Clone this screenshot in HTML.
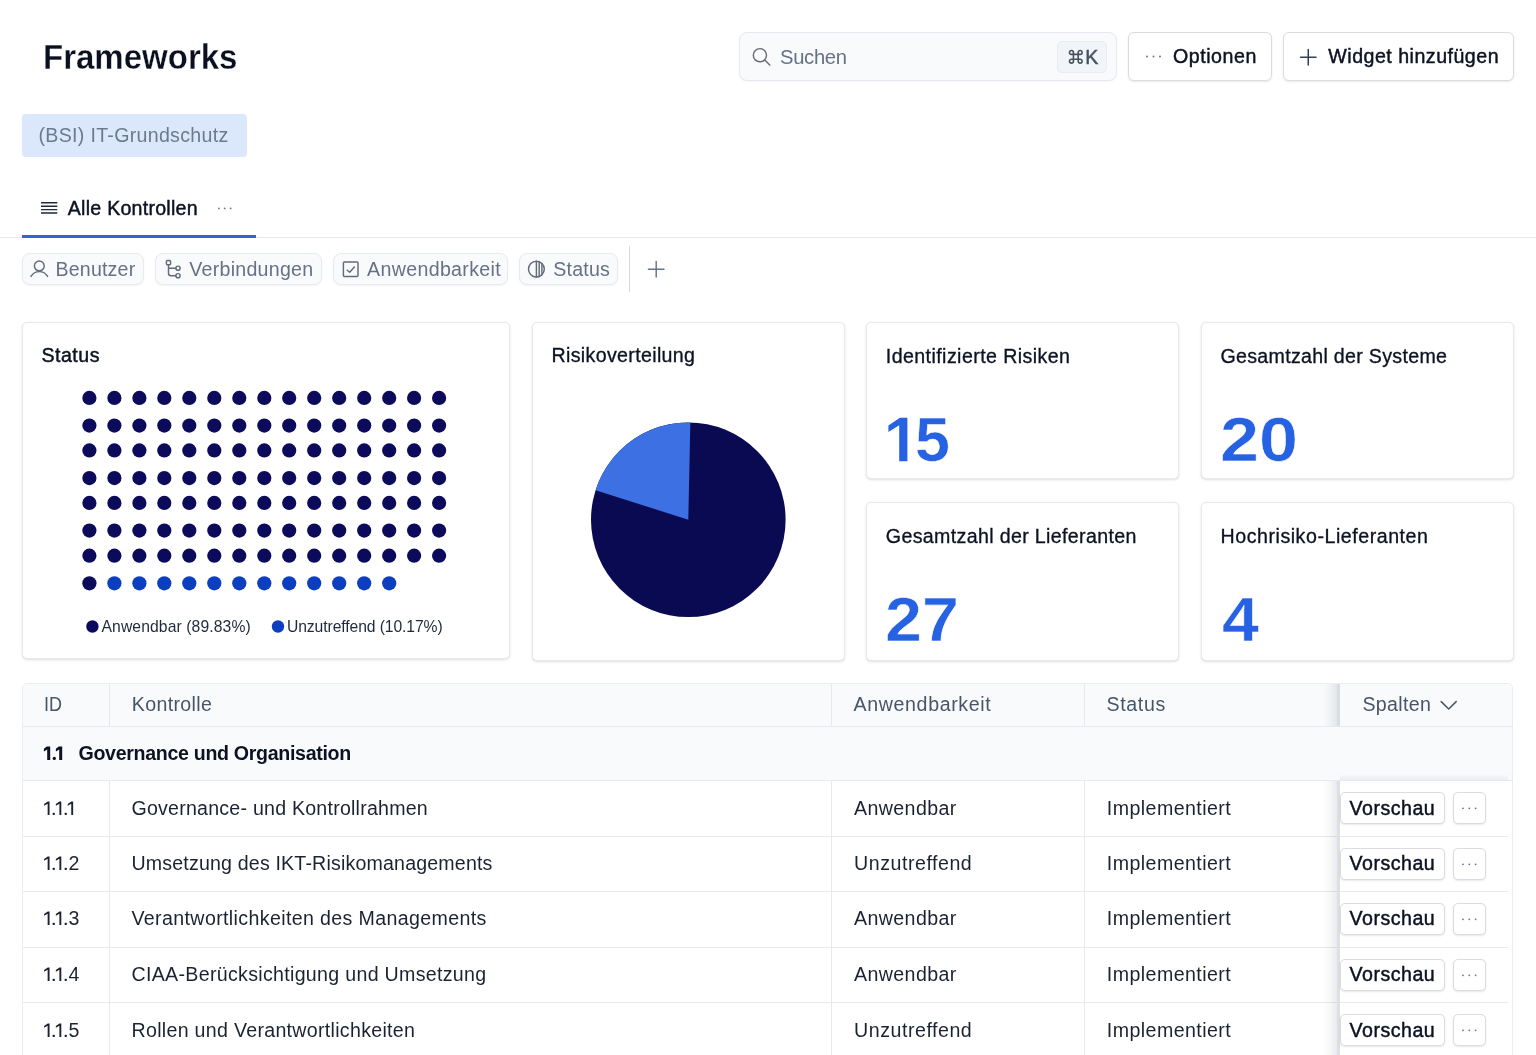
<!DOCTYPE html>
<html lang="de"><head><meta charset="utf-8"><title>Frameworks</title>
<style>
html,body{margin:0;padding:0;background:#fff;}
body{width:1536px;height:1055px;position:relative;overflow:hidden;will-change:transform;font-family:"Liberation Sans",sans-serif;color:#0f172a;}
.t{position:absolute;white-space:nowrap;display:block;}
.b{position:absolute;box-sizing:border-box;}
svg{position:absolute;overflow:visible;}
.card{position:absolute;box-sizing:border-box;background:#fff;border:1px solid #e7e9eb;border-radius:5px;box-shadow:0 1px 3px rgba(0,0,0,.10),0 1px 2px -1px rgba(0,0,0,.10);}
.chip{position:absolute;box-sizing:border-box;background:#f8fafc;border:1px solid #e7eaef;border-radius:8px;box-shadow:0 1px 2px rgba(15,23,42,.05);}
.btn{position:absolute;box-sizing:border-box;background:#fff;border:1px solid #d9dce1;border-radius:6px;box-shadow:0 1px 2px rgba(15,23,42,.10);}
</style></head><body>
<span class="t" style="left:43.00px;top:40.00px;font-size:34.4px;line-height:34.4px;color:#0b1020;font-weight:700;transform:scaleX(0.9597);transform-origin:0 0;-webkit-text-stroke:0.3px #fff;">Frameworks</span>
<div class="b" style="left:739px;top:32.4px;width:378px;height:48.4px;background:#f8fafc;border:1px solid #e6eaf0;border-radius:8px;box-shadow:0 1px 2px rgba(15,23,42,.04);"></div>
<svg style="left:750px;top:45px" width="22" height="22" viewBox="0 0 22 22" fill="none" stroke="#666e7b" stroke-width="1.45" stroke-linecap="round"><circle cx="9.9" cy="10.2" r="6.6"/><path d="M14.7 15 L19.8 20"/></svg>
<span class="t" style="left:780.00px;top:47.00px;font-size:20.2px;line-height:20.2px;color:#667186;letter-spacing:-0.301px;">Suchen</span>
<div class="b" style="left:1057px;top:41px;width:50px;height:31.6px;background:#f1f5f9;border:1px solid #e8ecf1;border-radius:5px;"></div>
<svg style="left:1068px;top:48.6px" width="15.6" height="15.6" viewBox="0 0 15 15" fill="none" stroke="#475260" stroke-width="1.55"><path d="M5.2 5.2 H9.8 V9.8 H5.2 Z M5.2 5.2 V3.3 A1.9 1.9 0 1 0 3.3 5.2 H5.2 M9.8 5.2 H11.7 A1.9 1.9 0 1 0 9.8 3.3 V5.2 M9.8 9.8 V11.7 A1.9 1.9 0 1 0 11.7 9.8 H9.8 M5.2 9.8 H3.3 A1.9 1.9 0 1 0 5.2 11.7 V9.8"/></svg>
<span class="t" style="left:1085.30px;top:48.00px;font-size:19.6px;line-height:19.6px;color:#475260;-webkit-text-stroke:0.45px #475260;">K</span>
<div class="btn" style="left:1128px;top:32.4px;width:143.6px;height:48.8px;"></div>
<svg style="left:1145px;top:54px" width="18" height="5" viewBox="0 0 18 5" fill="#64748b"><circle cx="2" cy="2.5" r="0.95"/><circle cx="8.5" cy="2.5" r="0.95"/><circle cx="15" cy="2.5" r="0.95"/></svg>
<span class="t" style="left:1173.00px;top:47.00px;font-size:19.6px;line-height:19.6px;color:#0c1222;letter-spacing:0.536px;-webkit-text-stroke:0.45px #0c1222;">Optionen</span>
<div class="btn" style="left:1283px;top:32.4px;width:230.6px;height:48.8px;"></div>
<svg style="left:1300px;top:48.5px" width="16.5" height="16.5" viewBox="0 0 16.5 16.5" fill="none" stroke="#334155" stroke-width="1.5" stroke-linecap="round"><path d="M8.25 0.5 V16 M0.5 8.25 H16"/></svg>
<span class="t" style="left:1328.30px;top:47.00px;font-size:19.6px;line-height:19.6px;color:#0c1222;letter-spacing:0.497px;-webkit-text-stroke:0.45px #0c1222;">Widget hinzufügen</span>
<div class="b" style="left:22px;top:114px;width:225px;height:43px;background:#dbe8fc;border-radius:4px;"></div>
<span class="t" style="left:38.50px;top:126.00px;font-size:19.6px;line-height:19.6px;color:#6b7a90;letter-spacing:0.302px;">(BSI) IT-Grundschutz</span>
<div class="b" style="left:0;top:237px;width:1536px;height:1px;background:#e5e7eb;"></div>
<div class="b" style="left:21.8px;top:234.8px;width:234.6px;height:3.2px;background:#3165d6;"></div>
<svg style="left:40.6px;top:202px" width="17" height="13" viewBox="0 0 17 13" fill="none" stroke="#1e293b" stroke-width="1.4"><path d="M0 0.8 H16.3 M0 4.25 H16.3 M0 7.65 H16.3 M0 11.05 H16.3"/></svg>
<span class="t" style="left:67.80px;top:199.00px;font-size:19.6px;line-height:19.6px;color:#0c1222;letter-spacing:0.244px;-webkit-text-stroke:0.45px #0c1222;">Alle Kontrollen</span>
<svg style="left:216.5px;top:206px" width="16" height="5" viewBox="0 0 16 5" fill="#64748b"><circle cx="1.9" cy="2.4" r="0.9"/><circle cx="7.7" cy="2.4" r="0.9"/><circle cx="13.6" cy="2.4" r="0.9"/></svg>
<div class="chip" style="left:21.8px;top:253.2px;width:121.8px;height:31.5px;"></div>
<div class="chip" style="left:154.8px;top:253.2px;width:166.89999999999998px;height:31.5px;"></div>
<div class="chip" style="left:332.8px;top:253.2px;width:174.8px;height:31.5px;"></div>
<div class="chip" style="left:518.8px;top:253.2px;width:98.80000000000007px;height:31.5px;"></div>
<svg style="left:29px;top:258px" width="20" height="20" viewBox="0 0 20 20" fill="none" stroke="#626b7a" stroke-width="1.45" stroke-linecap="round" stroke-linejoin="round"><circle cx="10.3" cy="7.9" r="4.9"/><path d="M2 18.4 C4.2 14.6 7.2 13.6 10.3 13.6 C13.4 13.6 16.4 14.6 18.6 18.4"/></svg>
<span class="t" style="left:55.50px;top:260.00px;font-size:19.6px;line-height:19.6px;color:#667186;letter-spacing:0.179px;">Benutzer</span>
<svg style="left:164px;top:258px" width="20" height="20" viewBox="0 0 20 20" fill="none" stroke="#626b7a" stroke-width="1.45" stroke-linecap="round" stroke-linejoin="round"><rect x="2.4" y="2.5" width="4.2" height="4.2" rx="1"/><path d="M4.5 6.7 V15.2 Q4.5 17.7 7 17.7 H11.8 M4.5 10.2 H11.8"/><circle cx="14" cy="10.2" r="2.1"/><circle cx="14" cy="17.7" r="2.1"/></svg>
<span class="t" style="left:189.30px;top:260.00px;font-size:19.6px;line-height:19.6px;color:#667186;letter-spacing:0.266px;">Verbindungen</span>
<svg style="left:341px;top:259px" width="20" height="20" viewBox="0 0 20 20" fill="none" stroke="#626b7a" stroke-width="1.45" stroke-linecap="round" stroke-linejoin="round"><rect x="2.4" y="3" width="14.6" height="14.4" rx="1"/><path d="M6.2 11.2 L8.7 13.3 L13.4 8"/></svg>
<span class="t" style="left:367.00px;top:260.00px;font-size:19.6px;line-height:19.6px;color:#667186;letter-spacing:0.345px;">Anwendbarkeit</span>
<svg style="left:526px;top:259px" width="21" height="21" viewBox="0 0 21 21" fill="none" stroke="#626b7a" stroke-width="1.45" stroke-linecap="round" stroke-linejoin="round" stroke-width="1.3"><circle cx="10.4" cy="10.1" r="7.9"/><path d="M10.4 2.2 V18 M13.2 2.8 V17.4 M15.9 4.5 V15.7"/></svg>
<span class="t" style="left:553.30px;top:260.00px;font-size:19.6px;line-height:19.6px;color:#667186;letter-spacing:0.207px;">Status</span>
<div class="b" style="left:628.7px;top:246.3px;width:1.3px;height:45.4px;background:#d5d9e0;"></div>
<svg style="left:647.5px;top:261px" width="16.5" height="16.5" viewBox="0 0 16.5 16.5" fill="none" stroke="#64748b" stroke-width="1.45" stroke-linecap="round"><path d="M8.2 0.4 V16 M0.4 8.2 H16"/></svg>
<div class="card" style="left:22px;top:322px;width:488px;height:337px;"></div>
<div class="card" style="left:532px;top:322px;width:313px;height:339px;"></div>
<div class="card" style="left:866px;top:322px;width:313px;height:157px;"></div>
<div class="card" style="left:1201px;top:322px;width:313px;height:157px;"></div>
<div class="card" style="left:866px;top:502px;width:313px;height:159px;"></div>
<div class="card" style="left:1201px;top:502px;width:313px;height:159px;"></div>
<span class="t" style="left:41.50px;top:346.00px;font-size:19.6px;line-height:19.6px;color:#0c1222;letter-spacing:0.487px;-webkit-text-stroke:0.45px #0c1222;">Status</span>
<svg style="left:0;top:0" width="1536" height="700" viewBox="0 0 1536 700"><circle cx="89.4" cy="397.9" r="7.1" fill="#0c0a5a"/><circle cx="114.4" cy="397.9" r="7.1" fill="#0c0a5a"/><circle cx="139.4" cy="397.9" r="7.1" fill="#0c0a5a"/><circle cx="164.3" cy="397.9" r="7.1" fill="#0c0a5a"/><circle cx="189.3" cy="397.9" r="7.1" fill="#0c0a5a"/><circle cx="214.3" cy="397.9" r="7.1" fill="#0c0a5a"/><circle cx="239.3" cy="397.9" r="7.1" fill="#0c0a5a"/><circle cx="264.3" cy="397.9" r="7.1" fill="#0c0a5a"/><circle cx="289.2" cy="397.9" r="7.1" fill="#0c0a5a"/><circle cx="314.2" cy="397.9" r="7.1" fill="#0c0a5a"/><circle cx="339.2" cy="397.9" r="7.1" fill="#0c0a5a"/><circle cx="364.2" cy="397.9" r="7.1" fill="#0c0a5a"/><circle cx="389.2" cy="397.9" r="7.1" fill="#0c0a5a"/><circle cx="414.1" cy="397.9" r="7.1" fill="#0c0a5a"/><circle cx="439.1" cy="397.9" r="7.1" fill="#0c0a5a"/><circle cx="89.4" cy="425.6" r="7.1" fill="#0c0a5a"/><circle cx="114.4" cy="425.6" r="7.1" fill="#0c0a5a"/><circle cx="139.4" cy="425.6" r="7.1" fill="#0c0a5a"/><circle cx="164.3" cy="425.6" r="7.1" fill="#0c0a5a"/><circle cx="189.3" cy="425.6" r="7.1" fill="#0c0a5a"/><circle cx="214.3" cy="425.6" r="7.1" fill="#0c0a5a"/><circle cx="239.3" cy="425.6" r="7.1" fill="#0c0a5a"/><circle cx="264.3" cy="425.6" r="7.1" fill="#0c0a5a"/><circle cx="289.2" cy="425.6" r="7.1" fill="#0c0a5a"/><circle cx="314.2" cy="425.6" r="7.1" fill="#0c0a5a"/><circle cx="339.2" cy="425.6" r="7.1" fill="#0c0a5a"/><circle cx="364.2" cy="425.6" r="7.1" fill="#0c0a5a"/><circle cx="389.2" cy="425.6" r="7.1" fill="#0c0a5a"/><circle cx="414.1" cy="425.6" r="7.1" fill="#0c0a5a"/><circle cx="439.1" cy="425.6" r="7.1" fill="#0c0a5a"/><circle cx="89.4" cy="450.4" r="7.1" fill="#0c0a5a"/><circle cx="114.4" cy="450.4" r="7.1" fill="#0c0a5a"/><circle cx="139.4" cy="450.4" r="7.1" fill="#0c0a5a"/><circle cx="164.3" cy="450.4" r="7.1" fill="#0c0a5a"/><circle cx="189.3" cy="450.4" r="7.1" fill="#0c0a5a"/><circle cx="214.3" cy="450.4" r="7.1" fill="#0c0a5a"/><circle cx="239.3" cy="450.4" r="7.1" fill="#0c0a5a"/><circle cx="264.3" cy="450.4" r="7.1" fill="#0c0a5a"/><circle cx="289.2" cy="450.4" r="7.1" fill="#0c0a5a"/><circle cx="314.2" cy="450.4" r="7.1" fill="#0c0a5a"/><circle cx="339.2" cy="450.4" r="7.1" fill="#0c0a5a"/><circle cx="364.2" cy="450.4" r="7.1" fill="#0c0a5a"/><circle cx="389.2" cy="450.4" r="7.1" fill="#0c0a5a"/><circle cx="414.1" cy="450.4" r="7.1" fill="#0c0a5a"/><circle cx="439.1" cy="450.4" r="7.1" fill="#0c0a5a"/><circle cx="89.4" cy="478.1" r="7.1" fill="#0c0a5a"/><circle cx="114.4" cy="478.1" r="7.1" fill="#0c0a5a"/><circle cx="139.4" cy="478.1" r="7.1" fill="#0c0a5a"/><circle cx="164.3" cy="478.1" r="7.1" fill="#0c0a5a"/><circle cx="189.3" cy="478.1" r="7.1" fill="#0c0a5a"/><circle cx="214.3" cy="478.1" r="7.1" fill="#0c0a5a"/><circle cx="239.3" cy="478.1" r="7.1" fill="#0c0a5a"/><circle cx="264.3" cy="478.1" r="7.1" fill="#0c0a5a"/><circle cx="289.2" cy="478.1" r="7.1" fill="#0c0a5a"/><circle cx="314.2" cy="478.1" r="7.1" fill="#0c0a5a"/><circle cx="339.2" cy="478.1" r="7.1" fill="#0c0a5a"/><circle cx="364.2" cy="478.1" r="7.1" fill="#0c0a5a"/><circle cx="389.2" cy="478.1" r="7.1" fill="#0c0a5a"/><circle cx="414.1" cy="478.1" r="7.1" fill="#0c0a5a"/><circle cx="439.1" cy="478.1" r="7.1" fill="#0c0a5a"/><circle cx="89.4" cy="502.9" r="7.1" fill="#0c0a5a"/><circle cx="114.4" cy="502.9" r="7.1" fill="#0c0a5a"/><circle cx="139.4" cy="502.9" r="7.1" fill="#0c0a5a"/><circle cx="164.3" cy="502.9" r="7.1" fill="#0c0a5a"/><circle cx="189.3" cy="502.9" r="7.1" fill="#0c0a5a"/><circle cx="214.3" cy="502.9" r="7.1" fill="#0c0a5a"/><circle cx="239.3" cy="502.9" r="7.1" fill="#0c0a5a"/><circle cx="264.3" cy="502.9" r="7.1" fill="#0c0a5a"/><circle cx="289.2" cy="502.9" r="7.1" fill="#0c0a5a"/><circle cx="314.2" cy="502.9" r="7.1" fill="#0c0a5a"/><circle cx="339.2" cy="502.9" r="7.1" fill="#0c0a5a"/><circle cx="364.2" cy="502.9" r="7.1" fill="#0c0a5a"/><circle cx="389.2" cy="502.9" r="7.1" fill="#0c0a5a"/><circle cx="414.1" cy="502.9" r="7.1" fill="#0c0a5a"/><circle cx="439.1" cy="502.9" r="7.1" fill="#0c0a5a"/><circle cx="89.4" cy="530.6" r="7.1" fill="#0c0a5a"/><circle cx="114.4" cy="530.6" r="7.1" fill="#0c0a5a"/><circle cx="139.4" cy="530.6" r="7.1" fill="#0c0a5a"/><circle cx="164.3" cy="530.6" r="7.1" fill="#0c0a5a"/><circle cx="189.3" cy="530.6" r="7.1" fill="#0c0a5a"/><circle cx="214.3" cy="530.6" r="7.1" fill="#0c0a5a"/><circle cx="239.3" cy="530.6" r="7.1" fill="#0c0a5a"/><circle cx="264.3" cy="530.6" r="7.1" fill="#0c0a5a"/><circle cx="289.2" cy="530.6" r="7.1" fill="#0c0a5a"/><circle cx="314.2" cy="530.6" r="7.1" fill="#0c0a5a"/><circle cx="339.2" cy="530.6" r="7.1" fill="#0c0a5a"/><circle cx="364.2" cy="530.6" r="7.1" fill="#0c0a5a"/><circle cx="389.2" cy="530.6" r="7.1" fill="#0c0a5a"/><circle cx="414.1" cy="530.6" r="7.1" fill="#0c0a5a"/><circle cx="439.1" cy="530.6" r="7.1" fill="#0c0a5a"/><circle cx="89.4" cy="555.7" r="7.1" fill="#0c0a5a"/><circle cx="114.4" cy="555.7" r="7.1" fill="#0c0a5a"/><circle cx="139.4" cy="555.7" r="7.1" fill="#0c0a5a"/><circle cx="164.3" cy="555.7" r="7.1" fill="#0c0a5a"/><circle cx="189.3" cy="555.7" r="7.1" fill="#0c0a5a"/><circle cx="214.3" cy="555.7" r="7.1" fill="#0c0a5a"/><circle cx="239.3" cy="555.7" r="7.1" fill="#0c0a5a"/><circle cx="264.3" cy="555.7" r="7.1" fill="#0c0a5a"/><circle cx="289.2" cy="555.7" r="7.1" fill="#0c0a5a"/><circle cx="314.2" cy="555.7" r="7.1" fill="#0c0a5a"/><circle cx="339.2" cy="555.7" r="7.1" fill="#0c0a5a"/><circle cx="364.2" cy="555.7" r="7.1" fill="#0c0a5a"/><circle cx="389.2" cy="555.7" r="7.1" fill="#0c0a5a"/><circle cx="414.1" cy="555.7" r="7.1" fill="#0c0a5a"/><circle cx="439.1" cy="555.7" r="7.1" fill="#0c0a5a"/><circle cx="89.4" cy="583.3" r="7.1" fill="#0c0a5a"/><circle cx="114.4" cy="583.3" r="7.1" fill="#0b3fc0"/><circle cx="139.4" cy="583.3" r="7.1" fill="#0b3fc0"/><circle cx="164.3" cy="583.3" r="7.1" fill="#0b3fc0"/><circle cx="189.3" cy="583.3" r="7.1" fill="#0b3fc0"/><circle cx="214.3" cy="583.3" r="7.1" fill="#0b3fc0"/><circle cx="239.3" cy="583.3" r="7.1" fill="#0b3fc0"/><circle cx="264.3" cy="583.3" r="7.1" fill="#0b3fc0"/><circle cx="289.2" cy="583.3" r="7.1" fill="#0b3fc0"/><circle cx="314.2" cy="583.3" r="7.1" fill="#0b3fc0"/><circle cx="339.2" cy="583.3" r="7.1" fill="#0b3fc0"/><circle cx="364.2" cy="583.3" r="7.1" fill="#0b3fc0"/><circle cx="389.2" cy="583.3" r="7.1" fill="#0b3fc0"/><circle cx="92.4" cy="626.5" r="6.2" fill="#0c0a5a"/><circle cx="278" cy="626.5" r="6.2" fill="#0b3fc0"/><circle cx="688.3" cy="519.75" r="97.3" fill="#0a0a52"/><path d="M688.3 519.75 L690.34 422.47 A97.3 97.3 0 0 0 595.61 490.17 Z" fill="#3d70e3"/></svg>
<span class="t" style="left:101.50px;top:619.00px;font-size:15.7px;line-height:15.7px;color:#1e293b;letter-spacing:0.107px;">Anwendbar (89.83%)</span>
<span class="t" style="left:287.00px;top:619.00px;font-size:15.7px;line-height:15.7px;color:#1e293b;letter-spacing:-0.093px;">Unzutreffend (10.17%)</span>
<span class="t" style="left:551.50px;top:346.00px;font-size:19.6px;line-height:19.6px;color:#0c1222;letter-spacing:0.344px;-webkit-text-stroke:0.32px #0c1222;">Risikoverteilung</span>
<span class="t" style="left:885.80px;top:347.00px;font-size:19.6px;line-height:19.6px;color:#0c1222;letter-spacing:0.420px;-webkit-text-stroke:0.32px #0c1222;">Identifizierte Risiken</span>
<span class="t" style="left:1220.50px;top:347.00px;font-size:19.6px;line-height:19.6px;color:#0c1222;letter-spacing:0.308px;-webkit-text-stroke:0.32px #0c1222;">Gesamtzahl der Systeme</span>
<span class="t" style="left:885.80px;top:527.00px;font-size:19.6px;line-height:19.6px;color:#0c1222;letter-spacing:0.353px;-webkit-text-stroke:0.32px #0c1222;">Gesamtzahl der Lieferanten</span>
<span class="t" style="left:1220.50px;top:527.00px;font-size:19.6px;line-height:19.6px;color:#0c1222;letter-spacing:0.543px;-webkit-text-stroke:0.32px #0c1222;">Hochrisiko-Lieferanten</span>
<svg style="left:0;top:0" width="1536" height="700" viewBox="0 0 1536 700"><path d="M907.4 417.8 H899.9 L888.4 425.4 V432.1 L899.2 425.2 V461.3 H907.4 Z" fill="#2762e3"/></svg>
<span class="t" style="left:915.30px;top:409.00px;font-size:62.2px;line-height:62.2px;color:#2762e3;font-weight:700;transform:scaleX(1.0118);transform-origin:0 0;-webkit-text-stroke:0.55px #fff;">5</span>
<span class="t" style="left:1219.50px;top:409.00px;font-size:62.2px;line-height:62.2px;color:#2762e3;font-weight:700;transform:scaleX(1.1274);transform-origin:0 0;-webkit-text-stroke:0.55px #fff;">20</span>
<span class="t" style="left:884.50px;top:589.00px;font-size:62.2px;line-height:62.2px;color:#2762e3;font-weight:700;transform:scaleX(1.0667);transform-origin:0 0;-webkit-text-stroke:0.55px #fff;">27</span>
<span class="t" style="left:1221.60px;top:589.00px;font-size:62.2px;line-height:62.2px;color:#2762e3;font-weight:700;transform:scaleX(1.0696);transform-origin:0 0;-webkit-text-stroke:0.55px #fff;">4</span>
<div class="b" style="left:21.5px;top:683px;width:1491.5px;height:400px;border:1px solid #e9ecf1;border-radius:5px;background:#fff;overflow:hidden;"><div class="b" style="left:0;top:0;width:1491px;height:97px;background:#f8fafc;"></div></div>
<div class="b" style="left:22.5px;top:726px;width:1490.0px;height:1px;background:#e6e9ed;"></div>
<div class="b" style="left:22.5px;top:780px;width:1490.0px;height:1px;background:#e6e9ed;"></div>
<div class="b" style="left:22.5px;top:836px;width:1485.5px;height:1px;background:#e6e9ed;"></div>
<div class="b" style="left:22.5px;top:891px;width:1485.5px;height:1px;background:#e6e9ed;"></div>
<div class="b" style="left:22.5px;top:947px;width:1485.5px;height:1px;background:#e6e9ed;"></div>
<div class="b" style="left:22.5px;top:1002px;width:1485.5px;height:1px;background:#e6e9ed;"></div>
<div class="b" style="left:22.5px;top:1058px;width:1485.5px;height:1px;background:#e6e9ed;"></div>
<div class="b" style="left:109px;top:684px;width:1px;height:42px;background:#e6e9ed;"></div>
<div class="b" style="left:109px;top:781px;width:1px;height:274px;background:#e6e9ed;"></div>
<div class="b" style="left:831px;top:684px;width:1px;height:42px;background:#e6e9ed;"></div>
<div class="b" style="left:831px;top:781px;width:1px;height:274px;background:#e6e9ed;"></div>
<div class="b" style="left:1084px;top:684px;width:1px;height:42px;background:#e6e9ed;"></div>
<div class="b" style="left:1084px;top:781px;width:1px;height:274px;background:#e6e9ed;"></div>
<div class="b" style="left:1323px;top:684px;width:14.5px;height:42px;background:linear-gradient(to right,rgba(30,41,59,0),rgba(30,41,59,.03) 40%,rgba(30,41,59,.10));"></div>
<div class="b" style="left:1323px;top:781px;width:14.5px;height:280px;background:linear-gradient(to right,rgba(30,41,59,0),rgba(30,41,59,.03) 40%,rgba(30,41,59,.10));"></div>
<div class="b" style="left:1337.4px;top:684px;width:2.2px;height:42px;background:#d9dce1;"></div>
<div class="b" style="left:1337.4px;top:781px;width:2.2px;height:280px;background:#dcdfe4;"></div>
<div class="b" style="left:1339.6px;top:781px;width:168.4px;height:280px;background:#fff;"></div>
<div class="b" style="left:1339.6px;top:774px;width:168.4px;height:6px;background:linear-gradient(to bottom,rgba(30,41,59,0),rgba(30,41,59,.06));"></div>
<div class="b" style="left:1339.6px;top:836px;width:168.4000000000001px;height:1px;background:#e6e9ed;"></div>
<div class="b" style="left:1339.6px;top:891px;width:168.4000000000001px;height:1px;background:#e6e9ed;"></div>
<div class="b" style="left:1339.6px;top:947px;width:168.4000000000001px;height:1px;background:#e6e9ed;"></div>
<div class="b" style="left:1339.6px;top:1002px;width:168.4000000000001px;height:1px;background:#e6e9ed;"></div>
<div class="b" style="left:1339.6px;top:1058px;width:168.4000000000001px;height:1px;background:#e6e9ed;"></div>
<span class="t" style="left:43.50px;top:695.00px;font-size:19.6px;line-height:19.6px;color:#475569;transform:scaleX(0.9184);transform-origin:0 0;">ID</span>
<span class="t" style="left:131.80px;top:695.00px;font-size:19.6px;line-height:19.6px;color:#475569;letter-spacing:0.331px;">Kontrolle</span>
<span class="t" style="left:853.50px;top:695.00px;font-size:19.6px;line-height:19.6px;color:#475569;letter-spacing:0.637px;">Anwendbarkeit</span>
<span class="t" style="left:1106.50px;top:695.00px;font-size:19.6px;line-height:19.6px;color:#475569;letter-spacing:0.647px;">Status</span>
<span class="t" style="left:1362.50px;top:695.00px;font-size:19.6px;line-height:19.6px;color:#475569;letter-spacing:0.304px;">Spalten</span>
<svg style="left:1440px;top:700px" width="18" height="11" viewBox="0 0 18 11" fill="none" stroke="#475569" stroke-width="1.5" stroke-linecap="round" stroke-linejoin="round"><path d="M1.2 1.6 L8.7 9 L16.2 1.6"/></svg>
<span class="t" style="left:78.50px;top:744.00px;font-size:19.6px;line-height:19.6px;color:#0c1222;font-weight:700;letter-spacing:-0.315px;">Governance und Organisation</span>
<span class="t" style="left:131.50px;top:799.00px;font-size:19.6px;line-height:19.6px;color:#1b2332;letter-spacing:0.224px;">Governance- und Kontrollrahmen</span>
<span class="t" style="left:854.00px;top:799.00px;font-size:19.6px;line-height:19.6px;color:#1b2332;letter-spacing:0.393px;">Anwendbar</span>
<span class="t" style="left:1106.80px;top:799.00px;font-size:19.6px;line-height:19.6px;color:#1b2332;letter-spacing:0.440px;">Implementiert</span>
<div class="btn" style="left:1340px;top:792px;width:105px;height:32px;border-radius:5px;"></div>
<span class="t" style="left:1349.60px;top:799.00px;font-size:19.6px;line-height:19.6px;color:#0c1222;letter-spacing:0.497px;-webkit-text-stroke:0.45px #0c1222;">Vorschau</span>
<div class="btn" style="left:1453px;top:792px;width:32.5px;height:32px;border-radius:5px;"></div>
<svg style="left:1461px;top:806.1px" width="17" height="5" viewBox="0 0 17 5" fill="#64748b"><circle cx="2" cy="2.3" r="0.9"/><circle cx="8.3" cy="2.3" r="0.9"/><circle cx="14.6" cy="2.3" r="0.9"/></svg>
<span class="t" style="left:68.60px;top:854.00px;font-size:19.6px;line-height:19.6px;color:#1b2332;">2</span>
<span class="t" style="left:131.50px;top:854.00px;font-size:19.6px;line-height:19.6px;color:#1b2332;letter-spacing:0.173px;">Umsetzung des IKT-Risikomanagements</span>
<span class="t" style="left:854.00px;top:854.00px;font-size:19.6px;line-height:19.6px;color:#1b2332;letter-spacing:0.540px;">Unzutreffend</span>
<span class="t" style="left:1106.80px;top:854.00px;font-size:19.6px;line-height:19.6px;color:#1b2332;letter-spacing:0.440px;">Implementiert</span>
<div class="btn" style="left:1340px;top:848px;width:105px;height:32px;border-radius:5px;"></div>
<span class="t" style="left:1349.60px;top:854.00px;font-size:19.6px;line-height:19.6px;color:#0c1222;letter-spacing:0.497px;-webkit-text-stroke:0.45px #0c1222;">Vorschau</span>
<div class="btn" style="left:1453px;top:848px;width:32.5px;height:32px;border-radius:5px;"></div>
<svg style="left:1461px;top:861.6px" width="17" height="5" viewBox="0 0 17 5" fill="#64748b"><circle cx="2" cy="2.3" r="0.9"/><circle cx="8.3" cy="2.3" r="0.9"/><circle cx="14.6" cy="2.3" r="0.9"/></svg>
<span class="t" style="left:68.60px;top:909.00px;font-size:19.6px;line-height:19.6px;color:#1b2332;">3</span>
<span class="t" style="left:131.50px;top:909.00px;font-size:19.6px;line-height:19.6px;color:#1b2332;letter-spacing:0.369px;">Verantwortlichkeiten des Managements</span>
<span class="t" style="left:854.00px;top:909.00px;font-size:19.6px;line-height:19.6px;color:#1b2332;letter-spacing:0.393px;">Anwendbar</span>
<span class="t" style="left:1106.80px;top:909.00px;font-size:19.6px;line-height:19.6px;color:#1b2332;letter-spacing:0.440px;">Implementiert</span>
<div class="btn" style="left:1340px;top:903px;width:105px;height:32px;border-radius:5px;"></div>
<span class="t" style="left:1349.60px;top:909.00px;font-size:19.6px;line-height:19.6px;color:#0c1222;letter-spacing:0.497px;-webkit-text-stroke:0.45px #0c1222;">Vorschau</span>
<div class="btn" style="left:1453px;top:903px;width:32.5px;height:32px;border-radius:5px;"></div>
<svg style="left:1461px;top:917.1px" width="17" height="5" viewBox="0 0 17 5" fill="#64748b"><circle cx="2" cy="2.3" r="0.9"/><circle cx="8.3" cy="2.3" r="0.9"/><circle cx="14.6" cy="2.3" r="0.9"/></svg>
<span class="t" style="left:68.60px;top:965.00px;font-size:19.6px;line-height:19.6px;color:#1b2332;">4</span>
<span class="t" style="left:131.50px;top:965.00px;font-size:19.6px;line-height:19.6px;color:#1b2332;letter-spacing:0.310px;">CIAA-Berücksichtigung und Umsetzung</span>
<span class="t" style="left:854.00px;top:965.00px;font-size:19.6px;line-height:19.6px;color:#1b2332;letter-spacing:0.393px;">Anwendbar</span>
<span class="t" style="left:1106.80px;top:965.00px;font-size:19.6px;line-height:19.6px;color:#1b2332;letter-spacing:0.440px;">Implementiert</span>
<div class="btn" style="left:1340px;top:959px;width:105px;height:32px;border-radius:5px;"></div>
<span class="t" style="left:1349.60px;top:965.00px;font-size:19.6px;line-height:19.6px;color:#0c1222;letter-spacing:0.497px;-webkit-text-stroke:0.45px #0c1222;">Vorschau</span>
<div class="btn" style="left:1453px;top:959px;width:32.5px;height:32px;border-radius:5px;"></div>
<svg style="left:1461px;top:972.7px" width="17" height="5" viewBox="0 0 17 5" fill="#64748b"><circle cx="2" cy="2.3" r="0.9"/><circle cx="8.3" cy="2.3" r="0.9"/><circle cx="14.6" cy="2.3" r="0.9"/></svg>
<span class="t" style="left:68.60px;top:1021.00px;font-size:19.6px;line-height:19.6px;color:#1b2332;">5</span>
<span class="t" style="left:131.50px;top:1021.00px;font-size:19.6px;line-height:19.6px;color:#1b2332;letter-spacing:0.298px;">Rollen und Verantwortlichkeiten</span>
<span class="t" style="left:854.00px;top:1021.00px;font-size:19.6px;line-height:19.6px;color:#1b2332;letter-spacing:0.540px;">Unzutreffend</span>
<span class="t" style="left:1106.80px;top:1021.00px;font-size:19.6px;line-height:19.6px;color:#1b2332;letter-spacing:0.440px;">Implementiert</span>
<div class="btn" style="left:1340px;top:1014px;width:105px;height:32px;border-radius:5px;"></div>
<span class="t" style="left:1349.60px;top:1021.00px;font-size:19.6px;line-height:19.6px;color:#0c1222;letter-spacing:0.497px;-webkit-text-stroke:0.45px #0c1222;">Vorschau</span>
<div class="btn" style="left:1453px;top:1014px;width:32.5px;height:32px;border-radius:5px;"></div>
<svg style="left:1461px;top:1028.2px" width="17" height="5" viewBox="0 0 17 5" fill="#64748b"><circle cx="2" cy="2.3" r="0.9"/><circle cx="8.3" cy="2.3" r="0.9"/><circle cx="14.6" cy="2.3" r="0.9"/></svg>
<svg style="left:0;top:0" width="1536" height="1055" viewBox="0 0 1536 1055"><path d="M50.20 746.50 H46.80 L43.90 748.80 V751.60 L47.20 749.60 V760.00 H50.20 Z" fill="#0c1222"/><circle cx="54.30" cy="758.45" r="1.65" fill="#0c1222"/><path d="M62.20 746.50 H58.80 L55.90 748.80 V751.60 L59.20 749.60 V760.00 H62.20 Z" fill="#0c1222"/><path d="M49.55 801.60 H47.75 L44.10 803.95 V805.80 L47.65 803.65 V815.00 H49.55 Z" fill="#1b2332"/><rect x="52.60" y="812.75" width="2.3" height="2.3" rx="0.7" fill="#1b2332"/><path d="M61.30 801.60 H59.50 L55.85 803.95 V805.80 L59.40 803.65 V815.00 H61.30 Z" fill="#1b2332"/><rect x="64.60" y="812.75" width="2.3" height="2.3" rx="0.7" fill="#1b2332"/><path d="M73.15 801.60 H71.35 L67.70 803.95 V805.80 L71.25 803.65 V815.00 H73.15 Z" fill="#1b2332"/><path d="M49.55 856.60 H47.75 L44.10 858.95 V860.80 L47.65 858.65 V870.00 H49.55 Z" fill="#1b2332"/><rect x="52.60" y="867.75" width="2.3" height="2.3" rx="0.7" fill="#1b2332"/><path d="M61.30 856.60 H59.50 L55.85 858.95 V860.80 L59.40 858.65 V870.00 H61.30 Z" fill="#1b2332"/><rect x="64.60" y="867.75" width="2.3" height="2.3" rx="0.7" fill="#1b2332"/><path d="M49.55 911.60 H47.75 L44.10 913.95 V915.80 L47.65 913.65 V925.00 H49.55 Z" fill="#1b2332"/><rect x="52.60" y="922.75" width="2.3" height="2.3" rx="0.7" fill="#1b2332"/><path d="M61.30 911.60 H59.50 L55.85 913.95 V915.80 L59.40 913.65 V925.00 H61.30 Z" fill="#1b2332"/><rect x="64.60" y="922.75" width="2.3" height="2.3" rx="0.7" fill="#1b2332"/><path d="M49.55 967.60 H47.75 L44.10 969.95 V971.80 L47.65 969.65 V981.00 H49.55 Z" fill="#1b2332"/><rect x="52.60" y="978.75" width="2.3" height="2.3" rx="0.7" fill="#1b2332"/><path d="M61.30 967.60 H59.50 L55.85 969.95 V971.80 L59.40 969.65 V981.00 H61.30 Z" fill="#1b2332"/><rect x="64.60" y="978.75" width="2.3" height="2.3" rx="0.7" fill="#1b2332"/><path d="M49.55 1023.60 H47.75 L44.10 1025.95 V1027.80 L47.65 1025.65 V1037.00 H49.55 Z" fill="#1b2332"/><rect x="52.60" y="1034.75" width="2.3" height="2.3" rx="0.7" fill="#1b2332"/><path d="M61.30 1023.60 H59.50 L55.85 1025.95 V1027.80 L59.40 1025.65 V1037.00 H61.30 Z" fill="#1b2332"/><rect x="64.60" y="1034.75" width="2.3" height="2.3" rx="0.7" fill="#1b2332"/></svg>
</body></html>
